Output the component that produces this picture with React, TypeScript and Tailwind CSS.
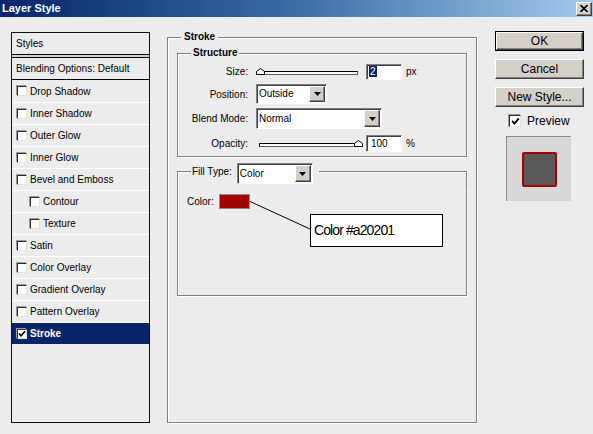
import React from "react";

// shared win-classic bevels
const sunken = "border border-t-[#808080] border-l-[#808080] border-b-white border-r-white shadow-[inset_1px_1px_0_#404040]";
const raised = "border border-t-white border-l-white border-b-[#404040] border-r-[#404040] shadow-[inset_-1px_-1px_0_#808080]";

const Check = ({ checked, big }: { checked?: boolean; big?: boolean }) => (
    <span className={(big ? "w-[12px] h-[12px] " : "w-[10px] h-[10px] ") + "shrink-0 flex items-center justify-center bg-white border border-t-[#303030] border-l-[#303030] border-b-[#e4e4e4] border-r-[#e4e4e4] shadow-[-1px_-1px_0_#9a9a9a]"}>
        {checked && (
            <svg width={big ? 9 : 8} height={big ? 9 : 8} viewBox="0 0 8 8">
                <path d="M1 3.5 L3 5.8 L7 1.2" fill="none" stroke="black" strokeWidth="1.6" />
            </svg>
        )}
    </span>
);

const Arrow = () => (
    <svg width="7" height="4" viewBox="0 0 7 4"><path d="M0 0 H7 L3.5 4 Z" fill="black" /></svg>
);

const Select = ({ value, width, height }: { value: string; width: string; height: string }) => (
    <div className={`${width} ${height} ${sunken} bg-white flex items-stretch p-[1px]`}>
        <span className="flex-1 flex items-center pl-[1px] leading-none">{value}</span>
        <span className={`w-[16px] ${raised} bg-[#d4d0c8] flex items-center justify-center`}>
            <Arrow />
        </span>
    </div>
);

const Slider = ({ atEnd }: { atEnd?: boolean }) => (
    <div className="relative w-[99px] h-[7px] flex items-end">
        <div className="w-full h-[4px] bg-white border border-t-black border-l-black border-b-[#606060] border-r-[#606060]" />
        <svg className={"absolute top-0 " + (atEnd ? "right-[-5px]" : "left-[-3px]")} width="9" height="7" viewBox="0 0 9 7">
            <path d="M0.5 6.5 V3.5 L4.5 0.5 L8.5 3.5 V6.5 Z" fill="white" stroke="black" />
        </svg>
    </div>
);

const styleRows: { label: string; indent?: boolean; checked?: boolean; selected?: boolean }[] = [
    { label: "Drop Shadow" },
    { label: "Inner Shadow" },
    { label: "Outer Glow" },
    { label: "Inner Glow" },
    { label: "Bevel and Emboss" },
    { label: "Contour", indent: true },
    { label: "Texture", indent: true },
    { label: "Satin" },
    { label: "Color Overlay" },
    { label: "Gradient Overlay" },
    { label: "Pattern Overlay" },
    { label: "Stroke", checked: true, selected: true },
];

const App: React.FC = () => {
    return (
        <div className="w-[593px] h-[434px] overflow-hidden bg-[#ececec] text-black font-['Liberation_Sans',Arial,sans-serif] text-[10px]">

            {/* Title bar */}
            <div className="h-[17px] flex items-center bg-linear-to-r from-[#0a246a] via-[#3a6ea5] to-[#a6caf0]">
                <span className="pl-[2px] text-white font-bold text-[11px] leading-none">Layer Style</span>
                <span className={`ml-auto mr-[1px] w-[16px] h-[14px] ${raised} bg-[#d4d0c8] flex items-center justify-center`}>
                    <svg width="8" height="7" viewBox="0 0 8 7"><path d="M0.5 0 L7.5 7 M7.5 0 L0.5 7" stroke="black" strokeWidth="1.6" /></svg>
                </span>
            </div>

            <div className="flex items-start pl-[11px] pt-[14px]">

                {/* Styles list */}
                <div className="mt-[1px] w-[139px] h-[391px] border border-[#111] bg-[#ececec] flex flex-col">
                    <div className="h-[22px] shrink-0 flex items-center pl-[4px] border-b border-black">Styles</div>
                    <div className="h-[2px] shrink-0 bg-[#d4d4d4]" />
                    <div className="h-[23px] shrink-0 flex items-center pl-[4px] border-y border-black">Blending Options: Default</div>
                    {styleRows.map((r, i) => (
                        <div
                            key={r.label}
                            className={
                                "h-[22px] shrink-0 flex items-center gap-[3px] " +
                                (i > 0 ? "border-t border-white " : "") +
                                (r.indent ? "pl-[18px] " : "pl-[5px] ") +
                                (r.selected ? "bg-[#0a246a] text-white font-bold" : "")
                            }
                        >
                            <Check checked={r.checked} />
                            <span>{r.label}</span>
                        </div>
                    ))}
                </div>

                {/* Stroke group */}
                <div className="ml-[17px] w-[310px] h-[392px] flex flex-col">
                    <div className="h-[12px] flex shrink-0">
                        <div className="w-[14px] h-[6px] self-end border-t border-l border-[#808080] shadow-[inset_1px_1px_0_#fff]" />
                        <span className="px-[3px] font-bold leading-[12px]">Stroke</span>
                        <div className="flex-1 h-[6px] self-end border-t border-r border-[#808080] shadow-[inset_0_1px_0_#fff,1px_0_0_#fff]" />
                    </div>
                    <div className="flex-1 border-x border-b border-[#808080] shadow-[inset_1px_0_0_#fff,1px_1px_0_#fff] px-[9px] pt-[4px] flex flex-col">

                        {/* Structure */}
                        <div className="h-[12px] flex shrink-0">
                            <div className="w-[14px] h-[6px] self-end border-t border-l border-[#808080] shadow-[inset_1px_1px_0_#fff]" />
                            <span className="px-[2px] font-bold leading-[12px]">Structure</span>
                            <div className="flex-1 h-[6px] self-end border-t border-r border-[#808080] shadow-[inset_0_1px_0_#fff,1px_0_0_#fff]" />
                        </div>
                        <div className="border-x border-b border-[#808080] shadow-[inset_1px_0_0_#fff,1px_1px_0_#fff] pl-[1px] pb-[4px] flex flex-col">
                            <div className="mt-[4px] h-[17px] flex items-center">
                                <span className="w-[69px] text-right">Size:</span>
                                <span className="ml-[11px]"><Slider /></span>
                                <span className={`ml-[8px] w-[36px] h-[16px] ${sunken} bg-white flex items-center pl-[2px]`}>
                                    <span className="bg-[#0a246a] text-white px-[1px] leading-[11px]">2</span>
                                </span>
                                <span className="ml-[4px]">px</span>
                            </div>
                            <div className="mt-[4px] h-[20px] flex items-center">
                                <span className="w-[69px] text-right">Position:</span>
                                <span className="ml-[8px]"><Select value="Outside" width="w-[71px]" height="h-[20px]" /></span>
                            </div>
                            <div className="mt-[4px] h-[21px] flex items-center">
                                <span className="w-[69px] text-right">Blend Mode:</span>
                                <span className="ml-[8px]"><Select value="Normal" width="w-[126px]" height="h-[21px]" /></span>
                            </div>
                            <div className="mt-[5px] h-[18px] flex items-center">
                                <span className="w-[69px] text-right">Opacity:</span>
                                <span className="ml-[11px]"><Slider atEnd /></span>
                                <span className={`ml-[8px] w-[36px] h-[17px] ${sunken} bg-white flex items-center pl-[4px]`}>100</span>
                                <span className="ml-[4px]">%</span>
                            </div>
                        </div>

                        {/* Fill */}
                        <div className="mt-[6px] h-[21px] flex shrink-0">
                            <div className="w-[14px] h-[13px] self-end border-t border-l border-[#808080] shadow-[inset_1px_1px_0_#fff]" />
                            <span className="pl-[1px] mt-[1px] leading-[16px]">Fill Type:</span>
                            <span className="ml-[5px]"><Select value="Color" width="w-[76px]" height="h-[21px]" /></span>
                            <div className="ml-[6px] flex-1 h-[13px] self-end border-t border-r border-[#808080] shadow-[inset_0_1px_0_#fff,1px_0_0_#fff]" />
                        </div>
                        <div className="relative h-[112px] border-x border-b border-[#808080] shadow-[inset_1px_0_0_#fff,1px_1px_0_#fff] pt-[10px] pl-[9px]">
                            <div className="flex items-center h-[15px]">
                                <span className="w-[32px]">Color:</span>
                                <span className="w-[31px] h-[15px] bg-[#a20201] border border-[#8c8c8c]" />
                            </div>

                            {/* annotation callout */}
                            <svg className="absolute left-0 top-0" width="140" height="60">
                                <line x1="72" y1="17.5" x2="132" y2="45" stroke="black" strokeWidth="1" />
                            </svg>
                            <div className="absolute left-[132px] top-[30px] w-[133px] h-[33px] bg-white border border-black flex items-center pl-[3px] text-[14px] tracking-[-0.9px]">
                                Color #a20201
                            </div>
                        </div>
                    </div>
                </div>

                {/* Buttons + preview */}
                <div className="ml-[18px] mt-[0px] w-[89px] flex flex-col text-[12px]">
                    <div className="h-[20px] border border-black">
                        <div className={`h-full ${raised} bg-[#d4d0c8] flex items-center justify-center`}>OK</div>
                    </div>
                    <div className={`mt-[8px] h-[20px] ${raised} bg-[#d4d0c8] flex items-center justify-center`}>Cancel</div>
                    <div className={`mt-[8px] h-[20px] ${raised} bg-[#d4d0c8] flex items-center justify-center`}>New Style...</div>
                    <div className="mt-[8px] pl-[14px] h-[12px] flex items-center gap-[6px]">
                        <Check checked big />
                        <span>Preview</span>
                    </div>
                    <div className="mt-[9px] ml-[11px] w-[65px] h-[65px] bg-[#d8d8d8] border-t border-l border-[#8a8a8a] flex items-center justify-center">
                        <div className="w-[35px] h-[35px] bg-[#595959] border-2 border-[#a20201] rounded-[2px]" />
                    </div>
                </div>
            </div>
        </div>
    );
};

export default App;
